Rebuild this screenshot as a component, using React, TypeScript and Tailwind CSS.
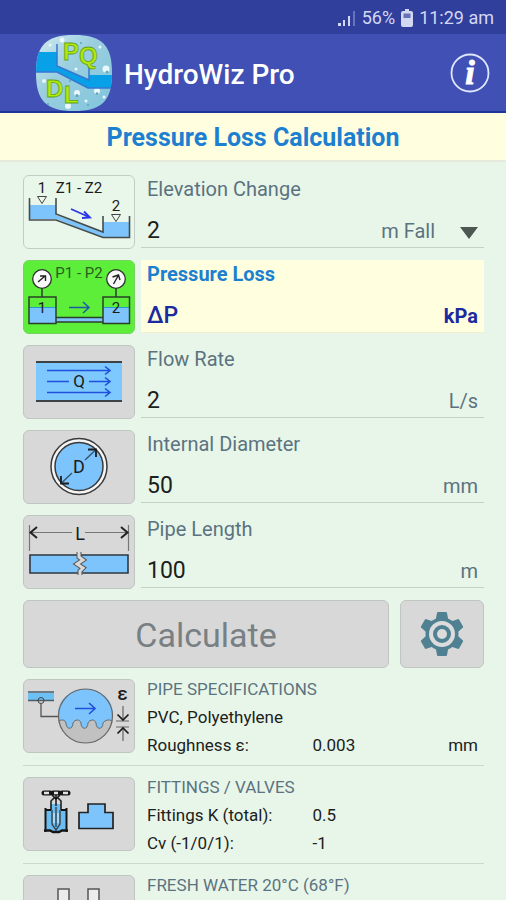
import React, { useState } from "react";

type FieldRowProps = {
  id: string;
  label: string;
  value: string;
  onChange?: (value: string) => void;
  icon: React.ReactNode;
  variant?: "plain" | "gray" | "active";
  children: React.ReactNode;
};

const tileStyles = {
  plain: "border-[#c3ccc4] bg-[#e9f6ea]",
  gray: "border-[#bfc6c0] bg-[#d8d8d8]",
  active: "border-[#74d45c] bg-[#5cee38]",
};

function Tile({
  label,
  variant = "gray",
  children,
}: {
  label: string;
  variant?: keyof typeof tileStyles;
  children: React.ReactNode;
}) {
  return (
    <button
      type="button"
      aria-label={label}
      className={`h-[74px] w-28 shrink-0 rounded-md border ${tileStyles[variant]}`}
    >
      <svg viewBox="0 0 112 74" className="-m-px h-[74px] w-28" fill="none">
        {children}
      </svg>
    </button>
  );
}

function FieldRow({ id, label, value, onChange, icon, variant = "gray", children }: FieldRowProps) {
  const active = variant === "active";

  return (
    <div className="flex gap-1.5">
      <Tile label={label} variant={variant}>
        {icon}
      </Tile>
      <div
        className={`flex h-[73px] min-w-0 flex-1 flex-col justify-between border-b px-1.5 ${
          active ? "border-[#f1efd0] bg-[#ffffe0] text-[#1c2aa0]" : "border-[#c5d0c6] text-[#5b7380]"
        }`}
      >
        <label
          htmlFor={id}
          className={`text-xl leading-7 ${active ? "font-bold text-[#1c7fd0]" : ""}`}
        >
          {label}
        </label>
        <div className="flex h-8 items-center">
          <input
            id={id}
            value={value}
            readOnly={!onChange}
            onChange={(e) => onChange?.(e.target.value)}
            className={`min-w-0 flex-1 bg-transparent outline-none ${
              active ? "text-[23px] font-medium" : "text-[23px] text-[#1b211c]"
            }`}
          />
          {children}
        </div>
      </div>
    </div>
  );
}

function Section({ title, icon, children }: { title: string; icon: React.ReactNode; children?: React.ReactNode }) {
  return (
    <section className="flex gap-3 border-b border-[#ccd7cd] pt-[11px] pb-3">
      <Tile label={title}>{icon}</Tile>
      <div className="-mt-1 -mb-2 min-w-0 flex-1 pr-1.5 text-[17px] leading-7 text-[#1b211c]">
        <h2 className="text-[#5b7380]">{title}</h2>
        {children}
      </div>
    </section>
  );
}

function SpecLine({ name, value, unit }: { name: string; value?: string; unit?: string }) {
  return (
    <div className="flex">
      <span className={value ? "w-1/2" : ""}>{name}</span>
      <span className="flex-1">{value}</span>
      <span>{unit}</span>
    </div>
  );
}

const iconText = {
  fill: "#1c1c1c",
  fontFamily: "Roboto, sans-serif",
  textAnchor: "middle" as const,
};

function ElevationIcon() {
  return (
    <>
      <path d="M7 30H33V40L80 57V47H106V62H79L33 44H7Z" fill="#7cc4fb" />
      <g stroke="#444c4c" strokeWidth="1.6">
        <path d="M6.500 23V45H33L80 62.500H106.500V41" />
        <path d="M33 23V39L80 57V41" />
      </g>
      <path d="M14.500 21.500H23.500L19 28.500ZM88.500 39.500H97.500L93 46.500Z" stroke="#444" fill="#edf6ec" />
      <path d="M48 34L66 42M61 36.500L67 42.500L59 43" stroke="#2a37ea" strokeWidth="1.8" />
      <g {...iconText} fontSize="15">
        <text x="19" y="18">1</text>
        <text x="56" y="18">Z1 - Z2</text>
        <text x="93" y="36">2</text>
      </g>
    </>
  );
}

function PressureIcon() {
  return (
    <>
      <path d="M6 47H33V58H80V47H106V63H80V62H33V63H6Z" fill="#7cc4fb" />
      <path d="M6 47.500H33M80 47.500H106" stroke="#259ccb" />
      <path d="M33 57.500V37H6V63.500H33V57.500H80V37H106.500V63.500H80V57.500M33 62H80M19 28V37M93 28V37" stroke="#2b402b" strokeWidth="1.5" />
      <g fill="#fafafa" stroke="#303030" strokeWidth="1.3">
        <circle cx="19" cy="19" r="9.300" />
        <circle cx="93" cy="19" r="9.300" />
      </g>
      <path d="M15 22L22 16M17 16H22.500V21M90.500 24L95 16M89.500 17L95.500 15L97 20" stroke="#222" strokeWidth="1.4" />
      <path d="M46 47.500H66M60 42L66 47.500L60 53" stroke="#2258a8" strokeWidth="1.5" />
      <g {...iconText} fontSize="15">
        <text x="56" y="18" fill="#28601f">P1 - P2</text>
        <text x="19" y="53">1</text>
        <text x="93" y="53">2</text>
      </g>
    </>
  );
}

function FlowIcon() {
  return (
    <>
      <path d="M13 17H99V56H13Z" fill="#7cc8ff" />
      <path d="M13 17H99M13 56H99" stroke="#3c4246" strokeWidth="2" />
      <path
        d="M24 25.500H87M24 36.500H46M66 36.500H87M24 47.500H87M82 21.500L87 25.500L82 29.500M82 32.500L87 36.500L82 40.500M82 43.500L87 47.500L82 51.500"
        stroke="#2050dc"
        strokeWidth="1.6"
      />
      <text {...iconText} x="56" y="42" fontSize="17">Q</text>
    </>
  );
}

function DiameterIcon() {
  return (
    <>
      <circle cx="56" cy="36.500" r="28" fill="#f5f5f5" stroke="#3a3a3a" strokeWidth="1.5" />
      <circle cx="56" cy="36.500" r="24" fill="#7cc4fb" stroke="#3a3a3a" strokeWidth="1.5" />
      <path d="M62 30L73 19.500M49 43L38 53.500" stroke="#34526e" strokeWidth="1.3" />
      <path d="M65 19.500H73V27M46 53.500H38V46" stroke="#1c1c1c" strokeWidth="1.8" />
      <text {...iconText} x="56" y="43" fontSize="18">D</text>
    </>
  );
}

function LengthIcon() {
  return (
    <>
      <path d="M7 40H105V58H7Z" fill="#7cc4fb" stroke="#2d3942" strokeWidth="1.6" />
      <path d="M56 37V42L60 45L54 49L60 53L57 56V60" stroke="#555" strokeWidth="5" />
      <path d="M56 37V42L60 45L54 49L60 53L57 56V60" stroke="#d8d8d8" strokeWidth="3" />
      <path d="M6.500 10V36M105.500 10V36M7 17.500H49M62 17.500H105" stroke="#777" strokeWidth="1.2" />
      <path d="M14 12L7.500 17.500L14 23M98 12L104.500 17.500L98 23" stroke="#222" strokeWidth="2" />
      <text {...iconText} x="57" y="25" fontSize="18">L</text>
    </>
  );
}

function RoughnessIcon() {
  return (
    <>
      <path d="M5 14H31V21H5Z" fill="#6cc0f4" />
      <path d="M5 13H31M5 21.500H31" stroke="#4c5c64" strokeWidth="1.6" />
      <circle cx="18" cy="21.500" r="3" stroke="#444" />
      <path d="M18 24.500V37.500H35" stroke="#555" strokeWidth="1.3" />
      <circle cx="62.500" cy="37" r="27" fill="#c1c1c1" />
      <path
        d="M36 42C39 40 42 41 43 44C43 51 50 51 50 44C52 40 57 40 58 44C58 51 65 51 65 44C67 40 72 40 73 44C73 51 80 51 80 44C82 41 86 40 89 42C94 24 80 10 62.500 10C45 10 31 24 36 42Z"
        fill="#7cc4fb"
      />
      <path d="M36 42C39 40 42 41 43 44C43 51 50 51 50 44C52 40 57 40 58 44C58 51 65 51 65 44C67 40 72 40 73 44C73 51 80 51 80 44C82 41 86 40 89 42" stroke="#636b70" />
      <circle cx="62.500" cy="37" r="27" stroke="#666" strokeWidth="1.2" />
      <path d="M52 29.500H72M66 24L72 29.500L66 35" stroke="#2050dc" strokeWidth="1.6" />
      <path d="M100 27V41M100 48V62M93 42H106M93 48H106" stroke="#666" strokeWidth="1.2" />
      <path d="M94.500 35.500L100 41L105.500 35.500M94.500 54.500L100 49L105.500 54.500" stroke="#1c1c1c" strokeWidth="1.7" />
      <text {...iconText} x="99.500" y="21" fontSize="19" fontWeight="500">ε</text>
    </>
  );
}

function FittingsIcon() {
  return (
    <>
      {/* gate valve */}
      <path d="M22 33H27V27H38V33H43.500V54H22Z" fill="#6cbcf0" />
      <path d="M28 33V24L31 21H35L38 24V33M33 18V29" stroke="#222" strokeWidth="1.6" />
      <path d="M22.500 31V55M43.500 31V55M22 33H28M38 33H44" stroke="#161616" strokeWidth="2" />
      <path d="M21 53.500H27L30 55H36L39 53.500H45" stroke="#161616" strokeWidth="2.500" />
      <path d="M29 33V47L33 53L37 47V33M33 30V50" stroke="#303a40" strokeWidth="1.300" />
      <path d="M31 36V46M35 36V46" stroke="#e8f1f5" />
      <path d="M21 16H27M30 16H36M39 16H45" stroke="#161616" strokeWidth="5" strokeLinecap="round" />
      <path d="M21 16H26M31 16H35M40 16H45" stroke="#e4e4e4" strokeWidth="2.500" />
      <path d="M29 18L33 22L37 18" stroke="#161616" strokeWidth="1.500" />
      {/* tee */}
      <path d="M56 35.500H65V27H82V35.500H90V51.500H56Z" fill="#7cc4fb" stroke="#222" strokeWidth="1.700" />
    </>
  );
}

function WaterIcon() {
  return (
    <path
      d="M35 14H46V60H35ZM65 14H76V60H65Z"
      fill="#ececec"
      stroke="#555"
      strokeWidth="1.500"
    />
  );
}

function Logo() {
  const letter = {
    fill: "#b4e80c",
    stroke: "#5fa51c",
    strokeWidth: 0.8,
    fontFamily: "Liberation Sans, sans-serif",
    fontWeight: 700,
    fontSize: 24,
  };

  return (
    <svg viewBox="0 0 76 76" className="size-19 shrink-0" role="img" aria-label="HydroWiz Pro logo">
      <defs>
        <linearGradient id="wet" x1="0" y1="0" x2="1" y2="1">
          <stop offset="0" stopColor="#d3eaf0" />
          <stop offset="0.400" stopColor="#9ccfdf" />
          <stop offset="1" stopColor="#7fc4dc" />
        </linearGradient>
        <clipPath id="badge">
          <path d="M38 0C66 0 76 10 76 38S66 76 38 76S0 66 0 38S10 0 38 0Z" />
        </clipPath>
      </defs>
      <g clipPath="url(#badge)">
        <path d="M0 0H76V76H0Z" fill="url(#wet)" />
        <g fill="#e9f6fa">
          <circle cx="26" cy="5" r="2.500" />
          <circle cx="70" cy="34" r="3.500" />
          <circle cx="61" cy="56" r="3" />
          <circle cx="41" cy="58" r="3" />
          <circle cx="32" cy="71" r="3" />
          <circle cx="8" cy="46" r="2" />
          <circle cx="64" cy="12" r="1.500" />
          <circle cx="50" cy="66" r="1.500" />
          <circle cx="14" cy="10" r="1.500" />
          <circle cx="40" cy="34" r="1.500" />
          <circle cx="25" cy="50" r="1.500" />
          <circle cx="68" cy="62" r="1.500" />
        </g>
        <g fill="#5ba6bd">
          <circle cx="41" cy="60.500" r="1.500" />
          <circle cx="71" cy="37" r="1.300" />
          <circle cx="61" cy="58.500" r="1.200" />
          <circle cx="45" cy="8" r="1" />
          <circle cx="12" cy="69" r="1" />
          <circle cx="34" cy="46" r="1" />
          <circle cx="52" cy="70" r="1" />
        </g>
        {/* tank, sloping pipe, tank */}
        <path d="M-2 17H21V31L53 45V40H78V53H52L21 37H-2Z" fill="#08a0e6" />
        <path d="M21 9V31L53 45V30M-2 37H21L52 53H78" fill="none" stroke="#3677d2" strokeWidth="1.500" />
        <text x="27" y="25" {...letter}>P</text>
        <text x="43" y="29" {...letter}>Q</text>
        <text x="10" y="62" {...letter}>D</text>
        <text x="28" y="68" {...letter}>L</text>
      </g>
    </svg>
  );
}

export default function App() {
  const [values, setValues] = useState({ elevation: "2", flow: "2", diameter: "50", length: "100" });
  const [direction, setDirection] = useState("m Fall");

  const update = (key: keyof typeof values) => (value: string) =>
    setValues((prev) => ({ ...prev, [key]: value }));

  return (
    <div className="flex h-screen flex-col overflow-hidden bg-[#e8f6e9] font-['Roboto',sans-serif]">
      {/* Status bar */}
      <div className="flex h-[34px] shrink-0 items-center justify-end gap-1.5 bg-[#303e9c] pt-0.5 pr-3 text-lg text-[#d3d8f2]">
        <svg viewBox="0 0 18 18" className="size-[18px]" fill="currentColor">
          <path d="M0 14H3V17H0ZM5 11H7V17H5ZM10 7H12V17H10Z" />
          <path d="M15 2H17V17H15Z" opacity="0.350" />
        </svg>
        <span>56%</span>
        <svg viewBox="0 0 12 18" className="h-[18px] w-3" fill="currentColor">
          <path d="M4 0H8V2H10Q12 2 12 4V16Q12 18 10 18H2Q0 18 0 16V4Q0 2 2 2H4Z" />
          <path d="M2.500 4.500H9.500V9H2.500Z" fill="#6672b8" />
        </svg>
        <span>11:29 am</span>
      </div>

      {/* App bar */}
      <header className="flex h-[79px] shrink-0 items-center gap-3 border-b-2 border-[#1e369a] bg-[#4050b5] pr-4 pl-9">
        <Logo />
        <h1 className="flex-1 pt-1 text-[28px] font-medium text-white">HydroWiz Pro</h1>
        <button type="button" aria-label="Information">
          <svg viewBox="0 0 40 40" className="size-10">
            <circle cx="20" cy="20" r="18.500" fill="none" stroke="#dfe6ff" strokeWidth="1.800" />
            <text
              x="20"
              y="31"
              fontSize="34"
              fontWeight="700"
              fontStyle="italic"
              fontFamily="Liberation Serif, serif"
              textAnchor="middle"
              fill="#fff"
              stroke="#fff"
            >
              i
            </text>
          </svg>
        </button>
      </header>

      <h2 className="h-[49px] shrink-0 border-b-2 border-[#e6e9dc] bg-[#ffffe0] text-center text-[25px] leading-[50px] font-bold text-[#1c7fd0]">
        Pressure Loss Calculation
      </h2>

      <main className="min-h-0 flex-1 overflow-y-auto pt-[13px] pr-[22px] pl-[23px] [scrollbar-width:none]">
        <div className="space-y-[11px]">
          <FieldRow
            id="elevation"
            label="Elevation Change"
            value={values.elevation}
            onChange={update("elevation")}
            variant="plain"
            icon={<ElevationIcon />}
          >
            <div className="relative">
              <select
                aria-label="Elevation direction"
                value={direction}
                onChange={(e) => setDirection(e.target.value)}
                className="appearance-none bg-transparent pr-[43px] text-xl outline-none [text-align-last:right]"
              >
                <option>m Fall</option>
                <option>m Rise</option>
              </select>
              <svg viewBox="0 0 18 12" className="pointer-events-none absolute top-2.5 right-0 h-3 w-[18px]">
                <path d="M0 0H18L9 12Z" fill="#4d5752" />
              </svg>
            </div>
          </FieldRow>
          <FieldRow id="pressure" label="Pressure Loss" value="ΔP" variant="active" icon={<PressureIcon />}>
            <span className="text-xl font-bold">kPa</span>
          </FieldRow>
          <FieldRow id="flow" label="Flow Rate" value={values.flow} onChange={update("flow")} icon={<FlowIcon />}>
            <span className="text-xl">L/s</span>
          </FieldRow>
          <FieldRow
            id="diameter"
            label="Internal Diameter"
            value={values.diameter}
            onChange={update("diameter")}
            icon={<DiameterIcon />}
          >
            <span className="text-xl">mm</span>
          </FieldRow>
          <FieldRow
            id="length"
            label="Pipe Length"
            value={values.length}
            onChange={update("length")}
            icon={<LengthIcon />}
          >
            <span className="text-xl">m</span>
          </FieldRow>

          {/* Actions */}
          <div className="flex h-[68px] gap-[11px]">
            <button
              type="button"
              className="flex-1 rounded-md border border-[#bfc6c0] bg-[#d8d8d8] pt-0.5 text-[34px] text-[#788084]"
            >
              Calculate
            </button>
            <button
              type="button"
              aria-label="Settings"
              className="flex w-[84px] items-center justify-center rounded-md border border-[#bfc6c0] bg-[#d8d8d8]"
            >
              <svg viewBox="-22 -22 44 44" className="size-11">
                <g fill="#4f8193">
                  <circle r="16.500" />
                  {[0, 60, 120, 180, 240, 300].map((angle) => (
                    <path key={angle} d="M-6.500 -13L-5 -21Q-4.800 -22 -4 -22H4Q4.800 -22 5 -21L6.500 -13Z" transform={`rotate(${angle})`} />
                  ))}
                </g>
                <circle r="11" fill="none" stroke="#dcdcdc" strokeWidth="4" />
                <circle r="5" fill="#dcdcdc" />
              </svg>
            </button>
          </div>
        </div>

        <Section title="PIPE SPECIFICATIONS" icon={<RoughnessIcon />}>
          <SpecLine name="PVC, Polyethylene" />
          <SpecLine name="Roughness ε:" value="0.003" unit="mm" />
        </Section>
        <Section title="FITTINGS / VALVES" icon={<FittingsIcon />}>
          <SpecLine name="Fittings K (total):" value="0.5" />
          <SpecLine name="Cv (-1/0/1):" value="-1" />
        </Section>
        <Section title="FRESH WATER 20°C (68°F)" icon={<WaterIcon />} />
      </main>
    </div>
  );
}
